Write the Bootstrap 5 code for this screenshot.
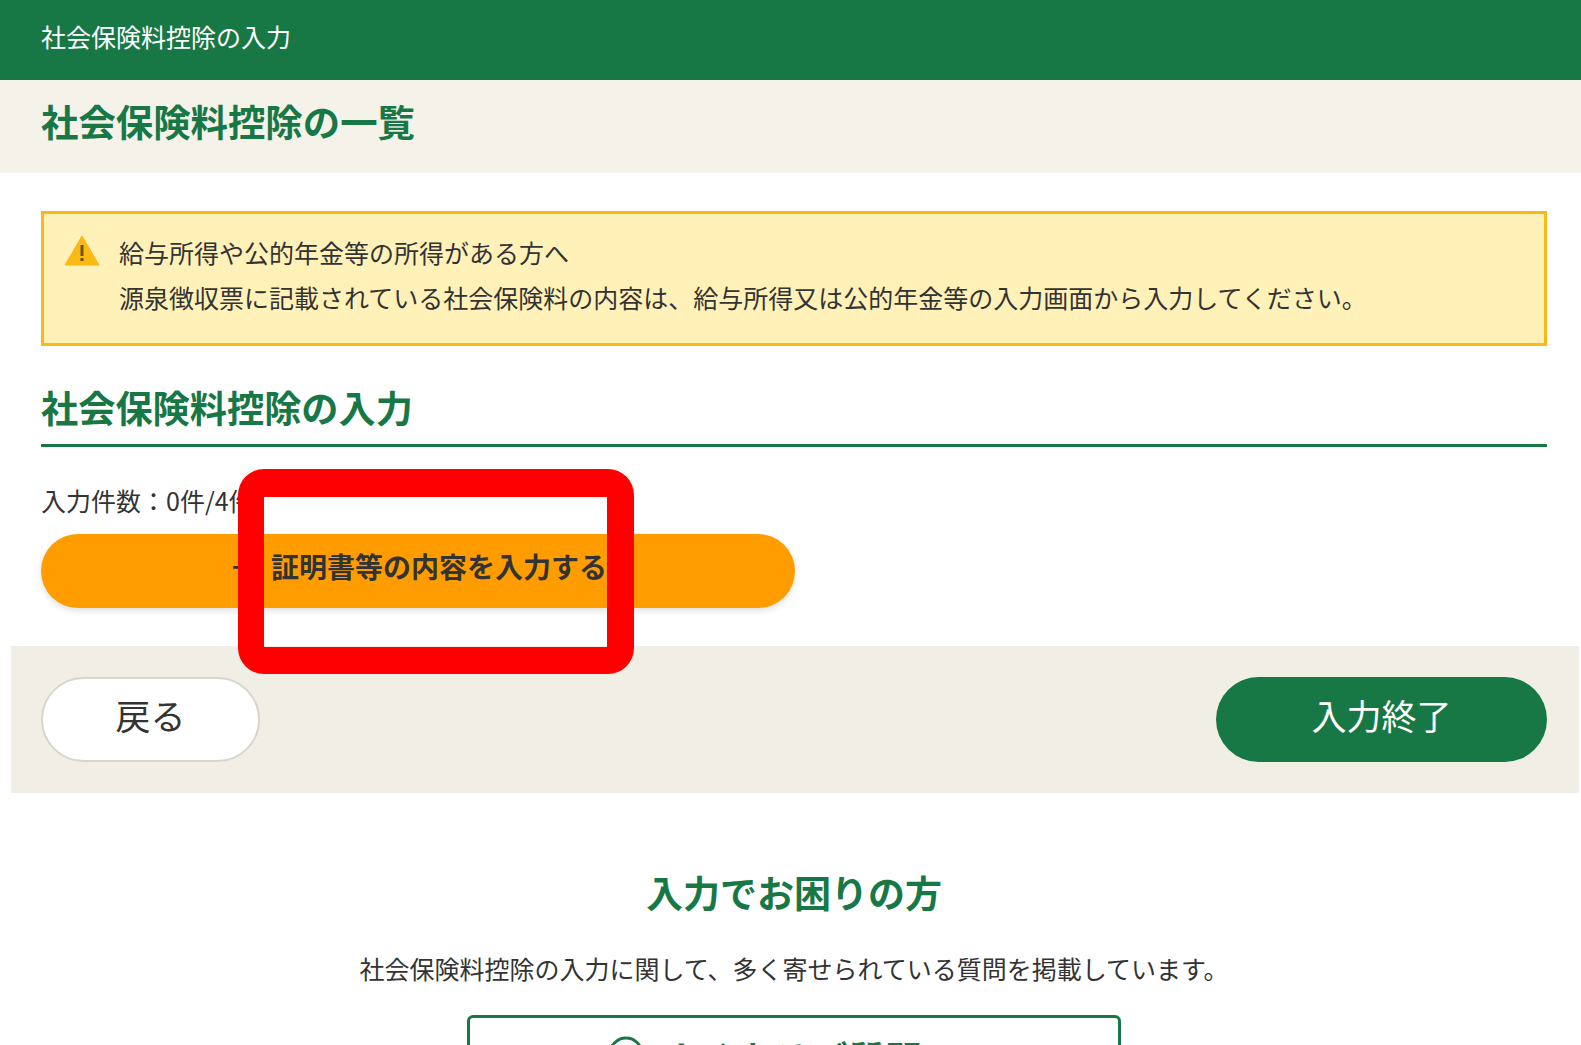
<!DOCTYPE html>
<html lang="ja">
<head>
<meta charset="utf-8">
<title>社会保険料控除の入力</title>
<link href="https://cdn.jsdelivr.net/npm/bootstrap@5.3.0/dist/css/bootstrap.min.css" rel="stylesheet">
<style>
html,body{height:1045px;overflow:hidden}
body{font-family:"Noto Sans CJK JP","Liberation Sans",sans-serif;color:#333;font-size:25px;background:#fff;position:relative}
.top-bar{background:#187845;color:#fff;height:80px;padding:0 0 6px 41px;font-size:25px}
.title-band{background:#f5f2ea;height:93px;padding:0 0 10px 41px}
.title-band h1{font-size:37.4px;font-weight:700;color:#187845;margin:0}
.main-area{padding:38px 34px 0 41px}
.notice-box{background:#fff1b8;border:3px solid #fbb916;height:135px;padding:16px 20px;gap:19px}
.notice-ic{margin-top:5px;flex:none}
.notice-line{line-height:45px;white-space:nowrap}
.sect-head{font-size:37.2px;font-weight:700;color:#187845;height:54px;line-height:48px;margin:37px 0 0;border-bottom:3px solid #187845;box-sizing:content-box;padding-bottom:7px}
.count-line{margin-top:33px;line-height:40px;height:40px}
.add-btn{background:#ff9d00;width:754px;height:74px;border-radius:37px;font-size:28px;font-weight:700;color:#333;box-shadow:0 3px 6px rgba(0,0,0,.12);margin-top:14px;padding:0 0 10px;gap:14px}
.foot-bar{background:#f1efe5;height:147px;margin:38px 2px 0 11px;padding:31px 32px 0 30px}
.back-btn{width:219px;height:85px;border-radius:43px;background:#fff;border:2px solid #d8d5cc;font-size:35px;color:#333;padding:0 0 8px}
.end-btn{width:331px;height:85px;border-radius:43px;background:#187845;border:0;font-size:35px;color:#fff;padding:0 0 8px}
.help-area{padding:0 34px 0 41px}
.help-title{font-size:37px;font-weight:700;color:#187845;margin:67px 0 0;line-height:64px}
.help-text{margin-top:24px;line-height:40px}
.faq-box{width:654px;height:60px;border:3px solid #187845;border-radius:6px;margin:27px auto 0;padding:18px 0 0 138px;font-size:37px;font-weight:700;line-height:44px;color:#187845;gap:19px}
.faq-ic{width:36px;height:36px;flex:none}
.red-frame{position:absolute;left:238px;top:469px;width:396px;height:205px;border-style:solid;border-color:#f00;border-width:28px 27px 27px 26px;border-radius:26px}
</style>
</head>
<body>
<div class="top-bar d-flex align-items-center">社会保険料控除の入力</div>
<div class="title-band d-flex align-items-center"><h1>社会保険料控除の一覧</h1></div>
<div class="main-area">
  <div class="notice-box d-flex">
    <svg width="36" height="31" viewBox="0 0 36 31" class="notice-ic"><path d="M18 1 35 30H1Z" fill="#fbb916" stroke="#fbb916" stroke-linejoin="round"/><rect x="16.5" y="10" width="3" height="11" fill="#6b5300"/><rect x="16.5" y="23" width="3" height="3" fill="#6b5300"/></svg>
    <div>
      <div class="notice-line">給与所得や公的年金等の所得がある方へ</div>
      <div class="notice-line">源泉徴収票に記載されている社会保険料の内容は、給与所得又は公的年金等の入力画面から入力してください。</div>
    </div>
  </div>
  <h2 class="sect-head">社会保険料控除の入力</h2>
  <div class="count-line">入力件数：0件/4件</div>
  <button type="button" class="btn add-btn d-flex align-items-center justify-content-center"><span>＋</span><span>証明書等の内容を入力する</span></button>
</div>
<div class="foot-bar d-flex justify-content-between">
  <button type="button" class="btn back-btn">戻る</button>
  <button type="button" class="btn end-btn">入力終了</button>
</div>
<div class="help-area text-center">
  <h2 class="help-title">入力でお困りの方</h2>
  <div class="help-text">社会保険料控除の入力に関して、多く寄せられている質問を掲載しています。</div>
  <div class="faq-box d-flex align-items-start">
    <svg class="faq-ic" viewBox="0 0 36 36"><circle cx="18" cy="18" r="16" fill="none" stroke="#187845" stroke-width="3"/></svg>
    <span>よくあるご質問</span>
  </div>
</div>
<div class="red-frame"></div>
<script src="https://cdn.jsdelivr.net/npm/bootstrap@5.3.0/dist/js/bootstrap.bundle.min.js"></script>
</body>
</html>
